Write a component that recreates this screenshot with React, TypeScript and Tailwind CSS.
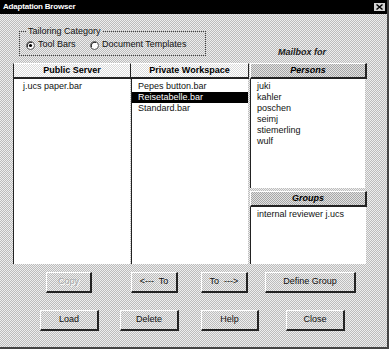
const dither =
  'bg-[image:repeating-conic-gradient(#bcbcbc_0%_25%,#eeeeee_0%_50%)] bg-[length:2px_2px]';
const lightDither =
  'bg-[image:repeating-conic-gradient(#dadada_0%_25%,#ffffff_0%_50%)] bg-[length:2px_2px]';
const darkDither =
  'bg-[image:repeating-conic-gradient(#a6a6a6_0%_25%,#e2e2e2_0%_50%)] bg-[length:2px_2px]';

const buttonClass = `h-[21px] flex items-center justify-center border-t border-l border-r-2 border-b-2 border-t-white border-l-white border-r-[#222] border-b-[#222] ${dither}`;

interface RadioProps {
  checked?: boolean;
}
const Radio = ({ checked }: RadioProps) => {
  return (
    <svg width="9" height="9" viewBox="0 0 9 9" className="shrink-0">
      <circle cx="4.5" cy="4.5" r="4" fill="#fff" stroke="#555" strokeWidth="1" />
      <path d="M1.5 6 A3.5 3.5 0 0 1 6 1.5" fill="none" stroke="#222" strokeWidth="1" />
      {checked && <circle cx="4.5" cy="4.5" r="1.6" fill="#000" />}
    </svg>
  );
};

interface ButtonProps {
  label: string;
  width: string;
  disabled?: boolean;
}
const Button = ({ label, width, disabled }: ButtonProps) => {
  return (
    <div className={`${buttonClass} ${width}`}>
      <span
        className={`whitespace-pre ${disabled ? 'text-[#a8a8a8] [text-shadow:1px_1px_0_#fff]' : 'text-[#111]'}`}
      >
        {label}
      </span>
    </div>
  );
};

interface ListProps {
  items: string[];
  selected?: string;
  className: string;
  indent: string;
}
const List = ({ items, selected, className, indent }: ListProps) => {
  return (
    <div className={`bg-white border-l border-[#222] pt-[2px] ${className}`}>
      {items.map((item) => (
        <div
          key={item}
          className={`h-[11px] leading-[11px] ${indent} ${item === selected ? 'bg-black text-white' : 'text-[#111]'}`}
        >
          {item}
        </div>
      ))}
    </div>
  );
};

export default function App() {
  return (
    <div
      className={`w-[389px] h-[349px] flex flex-col overflow-hidden font-['Liberation_Sans',Arial,sans-serif] text-[9px] text-black border-r-2 border-b-2 border-[#444] ${dither}`}
    >
      {/* title bar */}
      <div className="h-[14px] bg-black flex items-center justify-between pl-[3px] pr-[1px]">
        <span className="text-white font-bold text-[8px] leading-none tracking-[-0.2px]">Adaptation Browser</span>
        <div className="w-[13px] h-[10px] bg-[#d4d4d4] border border-black flex items-center justify-center">
          <svg width="7" height="6" viewBox="0 0 7 6">
            <path d="M0.5 0.5 L6.5 5.5 M6.5 0.5 L0.5 5.5" stroke="#000" strokeWidth="1.4" />
          </svg>
        </div>
      </div>

      {/* category + mailbox label */}
      <div className="h-[49px] flex items-start">
        <fieldset className="ml-[19px] mt-[11px] w-[187px] m-0 p-0 min-w-0 border border-dotted border-[#444]">
          <legend className="ml-[6px] px-[2px] leading-[12px] text-[#111]">Tailoring Category</legend>
          <div className="flex items-center h-[12px] mt-[2px] mb-[4px] pl-[6px] text-[#111]">
            <div className="w-[64px] flex items-center gap-[3px]">
              <Radio checked />
              <span>Tool Bars</span>
            </div>
            <div className="flex items-center gap-[3px]">
              <Radio />
              <span>Document Templates</span>
            </div>
          </div>
        </fieldset>
        <div className="ml-[72px] mt-[33px] leading-[11px] italic font-bold text-[#222]">Mailbox for</div>
      </div>

      {/* lists */}
      <div className="h-[201px] flex pl-[13px]">
        <div className="w-[118px] flex flex-col">
          <div
            className={`h-[16px] flex items-center justify-center font-bold border-t border-l border-r border-b-2 border-t-white border-l-[#222] border-r-[#222] border-b-[#222] ${lightDither}`}
          >
            Public Server
          </div>
          <List items={['j.ucs paper.bar']} className="flex-1 w-[117px]" indent="pl-[9px]" />
        </div>

        <div className="w-[118px] flex flex-col">
          <div
            className={`h-[16px] flex items-center justify-center font-bold border-t border-r border-b-2 border-t-white border-r-[#222] border-b-[#222] ${lightDither}`}
          >
            Private Workspace
          </div>
          <List
            items={['Pepes button.bar', 'Reisetabelle.bar', 'Standard.bar']}
            selected="Reisetabelle.bar"
            className="flex-1 w-[117px]"
            indent="pl-[6px]"
          />
        </div>

        <div className="w-[117px] ml-[1px] flex flex-col">
          <div
            className={`h-[16px] flex items-center justify-center font-bold italic border-t border-l border-r-2 border-b-2 border-t-white border-l-white border-r-[#222] border-b-[#222] ${darkDither}`}
          >
            Persons
          </div>
          <List
            items={['juki', 'kahler', 'poschen', 'seimj', 'stiemerling', 'wulf']}
            className="h-[109px] w-[115px]"
            indent="pl-[6px]"
          />
          <div
            className={`mt-[3px] h-[16px] flex items-center justify-center font-bold italic border-t border-l border-r-2 border-b-2 border-t-white border-l-white border-r-[#222] border-b-[#222] ${darkDither}`}
          >
            Groups
          </div>
          <List items={['internal reviewer j.ucs']} className="flex-1 w-[116px]" indent="pl-[6px]" />
        </div>
      </div>

      {/* buttons */}
      <div className="mt-[8px] flex pl-[46px]">
        <Button label="Copy" width="w-[46px]" disabled />
        <div className="ml-[39px]">
          <Button label="<---  To" width="w-[47px]" />
        </div>
        <div className="ml-[23px]">
          <Button label="To  --->" width="w-[47px]" />
        </div>
        <div className="ml-[17px]">
          <Button label="Define Group" width="w-[91px]" />
        </div>
      </div>
      <div className="mt-[17px] flex pl-[40px]">
        <Button label="Load" width="w-[59px]" />
        <div className="ml-[21px]">
          <Button label="Delete" width="w-[59px]" />
        </div>
        <div className="ml-[22px]">
          <Button label="Help" width="w-[58px]" />
        </div>
        <div className="ml-[27px]">
          <Button label="Close" width="w-[59px]" />
        </div>
      </div>
    </div>
  );
}
